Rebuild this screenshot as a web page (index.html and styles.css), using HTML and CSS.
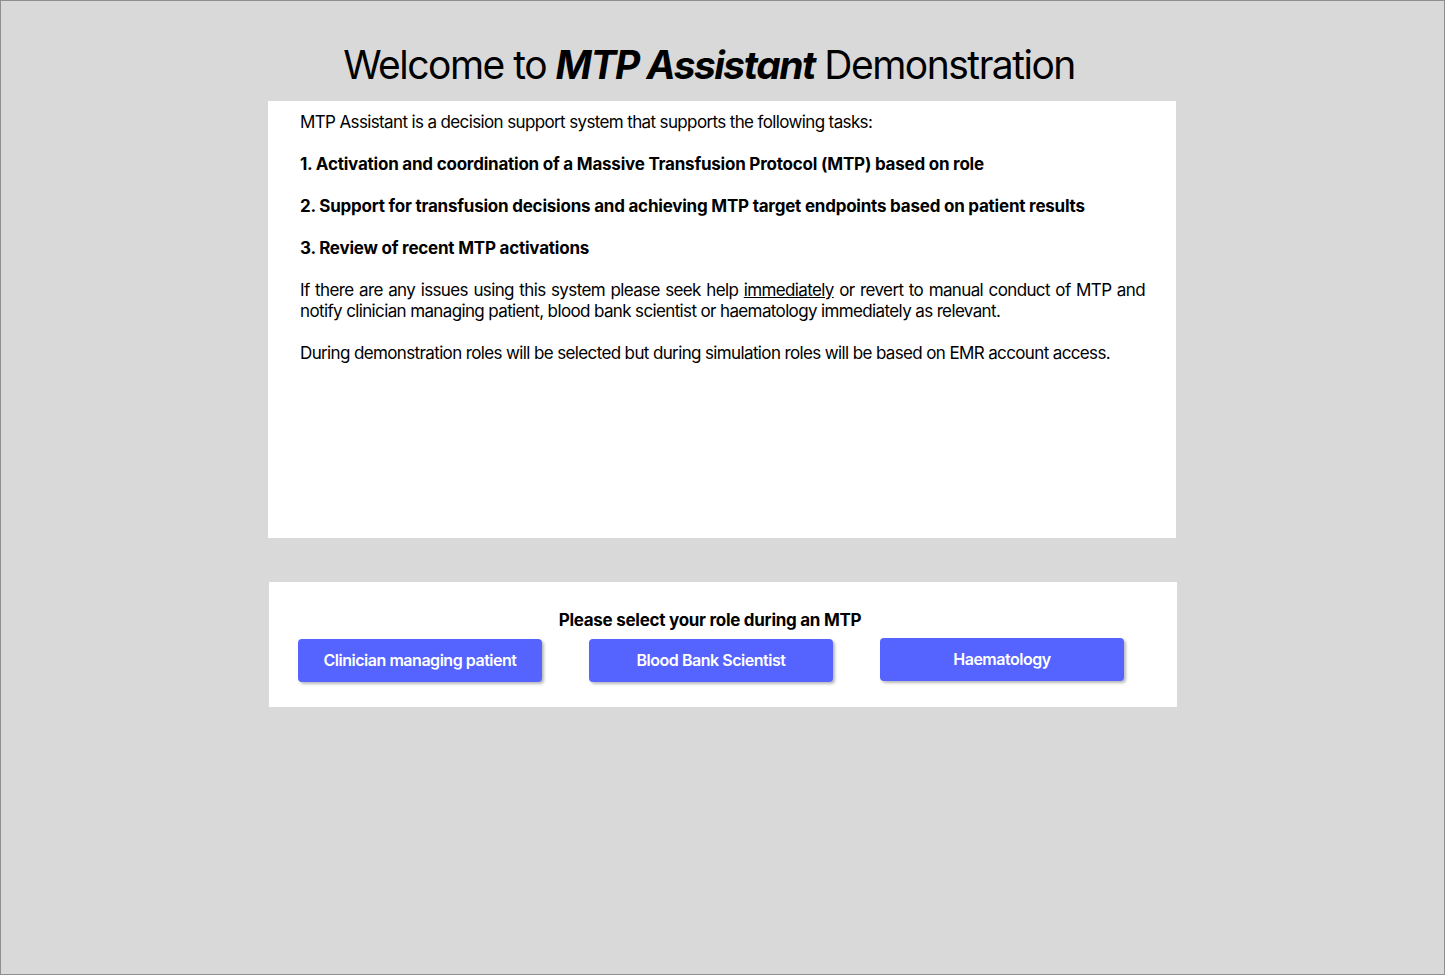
FILE: index.html
```html
<!DOCTYPE html>
<html lang="en">
<head>
<meta charset="utf-8">
<title>MTP Assistant Demonstration</title>
<link rel="stylesheet" href="styles.css">
</head>
<body>
<div class="page">
  <h1 class="title">Welcome to <em>MTP Assistant</em> Demonstration</h1>
  <section class="intro">
    <p>MTP Assistant is a decision support system that supports the following tasks:</p>
    <p class="task">1. Activation and coordination of a Massive Transfusion Protocol (MTP) based on role</p>
    <p class="task">2. Support for transfusion decisions and achieving MTP target endpoints based on patient results</p>
    <p class="task">3. Review of recent MTP activations</p>
    <p class="just">If there are any issues using this system please seek help <span class="ul">immediately</span> or revert to manual conduct of MTP and notify clinician managing patient, blood bank scientist or haematology immediately as relevant.</p>
    <p>During demonstration roles will be selected but during simulation roles will be based on EMR account access.</p>
  </section>
  <section class="roles">
    <h2 class="roles-title">Please select your role during an MTP</h2>
    <div class="role-buttons">
      <button class="role-btn">Clinician managing patient</button>
      <button class="role-btn">Blood Bank Scientist</button>
      <button class="role-btn up">Haematology</button>
    </div>
  </section>
</div>
</body>
</html>
```

FILE: styles.css
```css
* { box-sizing: border-box; }
html, body {
  margin: 0;
  padding: 0;
}
body {
  font-family: Inter, "Noto Sans", sans-serif;
  color: #000;
}
.page {
  height: 975px;
  border: 1px solid #8f8f8f;
  background: #d9d9d9;
  padding-top: 40px;
}
.title {
  margin: 0 0 12px 0;
  font-size: 39px;
  line-height: 48px;
  font-weight: 400;
  text-align: center;
  padding-right: 27px;
  letter-spacing: -1.5px;
}
.title em {
  font-style: italic;
  font-weight: 700;
}
.intro {
  margin-left: 267px;
  width: 908px;
  height: 437px;
  background: #fff;
  padding: 11px 31px 0 32px;
  font-size: 17px;
  line-height: 21px;
  letter-spacing: -0.63px;
}
.intro p {
  margin: 0 0 21px 0;
}
.intro .task {
  font-weight: 700;
  letter-spacing: -0.22px;
}
.intro .just {
  text-align: justify;
}
.intro .ul {
  text-decoration: underline;
}
.roles {
  margin-left: 268px;
  margin-top: 44px;
  width: 908px;
  height: 125px;
  background: #fff;
  padding: 28px 29px 0 29px;
}
.roles-title {
  margin: 0 0 8px 0;
  padding-right: 26px;
  font-size: 17px;
  line-height: 21px;
  font-weight: 700;
  text-align: center;
  letter-spacing: -0.27px;
}
.role-buttons {
  display: flex;
  gap: 47px;
  align-items: flex-start;
}
.role-btn {
  width: 244px;
  height: 43px;
  border: none;
  border-radius: 4px;
  background: #5563ff;
  color: #fff;
  font-family: Inter, "Noto Sans", sans-serif;
  font-size: 16px;
  font-weight: 600;
  letter-spacing: -0.47px;
  line-height: 20px;
  padding: 0 0 2px 0;
  box-shadow: 2px 2px 3px rgba(0, 0, 0, 0.28);
  cursor: pointer;
}
.role-btn.up {
  margin-top: -1px;
}
```
